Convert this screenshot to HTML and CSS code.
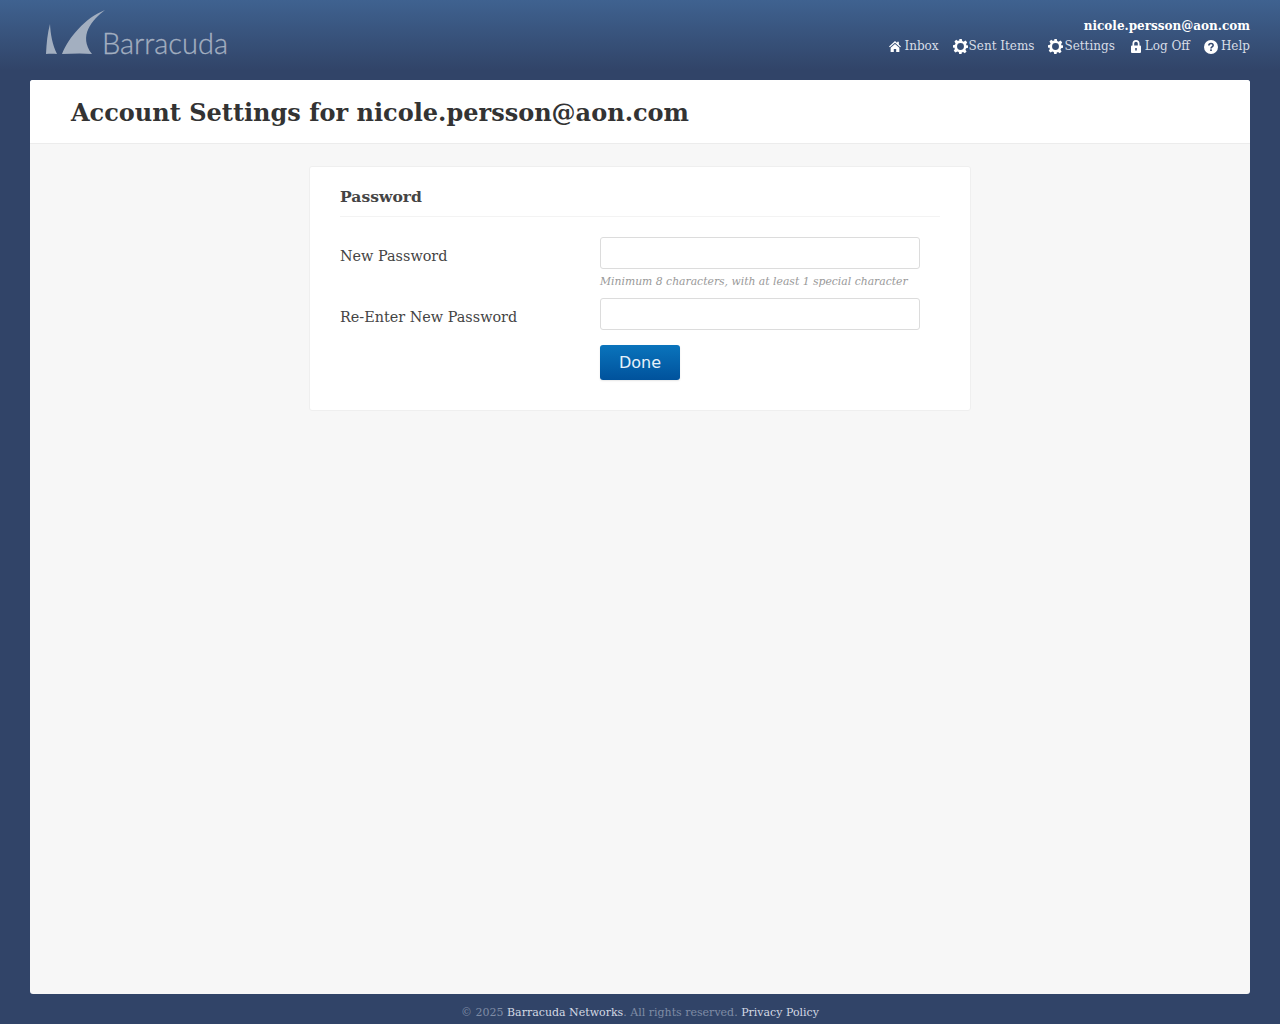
FILE: index.html
```html
<!DOCTYPE html>
<html lang="en">

<head>
    <meta charset="UTF-8">
    <title>Account Settings</title>
    <meta name="viewport" content="width=device-width, initial-scale=1.0">
    <link rel="stylesheet" href="styles.css">
</head>

<body>
    <header class="header">
        <a class="logo" href="#">
            <svg class="logo-mark" width="62" height="46" viewBox="0 0 62 46">
                <path d="M2 44 C2.500 33 3.500 23 6 14 C6.500 24 8.500 35 13 44 C9 43.500 6 43.500 2 44 Z" fill="#a3afc0" />
                <path d="M18 44 C25 27 41 8 61 0 C48 10 34 26 48 44 C38 43 28 43.500 18 44 Z" fill="#a3afc0" />
            </svg>
            <span class="logo-text">Barracuda</span>
        </a>
        <div class="user-area">
            <div class="user-name">nicole.persson@aon.com</div>
            <nav class="user-nav">
                <a href="#">
                    <svg class="icon" width="12" height="11" viewBox="0 0 11 10">
                        <path d="M5.500 0 L7.500 1.800 L7.500 .6 L9 .6 L9 3.100 L11 5 L10.200 5.800 L5.500 1.600 L.8 5.800 L0 5 Z M5.500 2.600 L9.500 6.200 L9.500 10 L6.600 10 L6.600 7.200 L4.400 7.200 L4.400 10 L1.500 10 L1.500 6.200 Z" fill="#fff" />
                    </svg>
                    Inbox
                </a>
                <a href="#" class="tight">
                    <svg class="icon" width="15" height="15" viewBox="0 0 24 24">
                        <path fill="#fff" fill-rule="evenodd" d="M10 0h4l.7 3.300 2.300 1 2.900-1.800 2.800 2.800-1.800 2.900 1 2.300L24 10v4l-3.100.7-1 2.300 1.800 2.900-2.800 2.800-2.900-1.800-2.300 1L13.900 24h-4l-.7-3.100-2.300-1-2.900 1.800-2.800-2.800 1.800-2.900-1-2.300L0 14v-4l3.100-.7 1-2.300L2.300 4.100l2.800-2.800 2.900 1.800 2.300-1zM12 6.500a5.500 5.500 0 1 0 0 11 5.500 5.500 0 0 0 0-11z" />
                    </svg>
                    Sent Items
                </a>
                <a href="#" class="tight">
                    <svg class="icon" width="15" height="15" viewBox="0 0 24 24">
                        <path fill="#fff" fill-rule="evenodd" d="M10 0h4l.7 3.300 2.300 1 2.900-1.800 2.800 2.800-1.800 2.900 1 2.300L24 10v4l-3.100.7-1 2.300 1.800 2.900-2.800 2.800-2.900-1.800-2.300 1L13.900 24h-4l-.7-3.100-2.300-1-2.900 1.800-2.800-2.800 1.800-2.900-1-2.300L0 14v-4l3.100-.7 1-2.300L2.300 4.100l2.800-2.800 2.900 1.800 2.300-1zM12 6.500a5.500 5.500 0 1 0 0 11 5.500 5.500 0 0 0 0-11z" />
                    </svg>
                    Settings
                </a>
                <a href="#" class="lock">
                    <svg class="icon" width="10" height="13" viewBox="0 0 10 13">
                        <path fill="#fff" fill-rule="evenodd" d="M1.500 5.500V3.500a3.500 3.500 0 0 1 7 0v2h.5a1 1 0 0 1 1 1V12a1 1 0 0 1-1 1H1a1 1 0 0 1-1-1V6.500a1 1 0 0 1 1-1zM3.200 5.500h3.600V3.500a1.800 1.800 0 0 0-3.600 0zM4.200 8v2.500h1.600V8z" />
                    </svg>
                    Log Off
                </a>
                <a href="#">
                    <svg class="icon" width="14" height="14" viewBox="0 0 15 15">
                        <circle cx="7.500" cy="7.500" r="7.500" fill="#fff" />
                        <path d="M5.200 5.900 C5.300 3 9.800 3 9.800 5.700 C9.800 7.400 7.500 7.300 7.500 9" fill="none" stroke="#34496f" stroke-width="1.700" />
                        <rect x="6.600" y="10" width="1.800" height="1.800" fill="#34496f" />
                    </svg>
                    Help
                </a>
            </nav>
        </div>
    </header>

    <main class="main">
        <div class="page-title">
            <h1>Account Settings for nicole.persson@aon.com</h1>
        </div>
        <div class="page-body">
            <form class="panel">
                <h2>Password</h2>
                <div class="form-row">
                    <label for="newPassword">New Password</label>
                    <div class="field">
                        <input type="password" id="newPassword">
                        <p class="hint">Minimum 8 characters, with at least 1 special character</p>
                    </div>
                </div>
                <div class="form-row">
                    <label for="confirmPassword">Re-Enter New Password</label>
                    <div class="field">
                        <input type="password" id="confirmPassword">
                    </div>
                </div>
                <div class="form-actions">
                    <button type="button">Done</button>
                </div>
            </form>
        </div>
    </main>

    <footer class="footer">
        © 2025 <a href="#">Barracuda Networks</a>. All rights reserved. <a href="#">Privacy Policy</a>
    </footer>
</body>

</html>
```

FILE: styles.css
```css
html,
body {
    margin: 0;
    padding: 0;
    height: 100%;
}

body {
    display: flex;
    flex-direction: column;
    background-color: #314468;
    font-family: "DejaVu Serif", serif;
    color: #444;
}

a {
    color: inherit;
    text-decoration: none;
}

.header {
    flex: none;
    height: 80px;
    box-sizing: border-box;
    padding: 0 30px;
    display: flex;
    justify-content: space-between;
    background: linear-gradient(to bottom, #3f6290 0%, #314468 88%);
}

.logo {
    display: flex;
    align-items: flex-end;
    height: 56px;
    padding-left: 14px;
}

.logo-mark {
    display: block;
}

.logo-text {
    margin: 0 0 -1px -4px;
    font-family: "Lato", "Open Sans", sans-serif;
    font-weight: 300;
    font-size: 29px;
    line-height: 29px;
    color: #a3afc0;
    -webkit-text-stroke: .3px #a3afc0;
}

.user-area {
    padding-top: 18px;
    text-align: right;
    color: #fff;
}

.user-name {
    font-size: 12px;
    line-height: 17px;
    font-weight: bold;
}

.user-nav {
    display: flex;
    justify-content: flex-end;
    gap: 14px;
    margin-top: 3px;
    font-size: 12px;
    line-height: 17px;
    color: #d8dde6;
}

.user-nav a {
    display: flex;
    align-items: center;
    gap: 3px;
}

.user-nav a.tight {
    gap: 1px;
}

.user-nav a.lock {
    gap: 4px;
    margin-left: 2px;
}

.icon {
    display: block;
}

.main {
    flex: 1;
    margin: 0 30px;
    display: flex;
    flex-direction: column;
    background-color: #f7f7f7;
    border-radius: 3px;
    overflow: hidden;
}

.page-title {
    flex: none;
    height: 61px;
    padding: 2px 40px 0 41px;
    display: flex;
    align-items: center;
    background-color: #fff;
    border-bottom: 1px solid #ececec;
}

.page-title h1 {
    margin: 0;
    font-size: 24px;
    font-weight: bold;
    color: #333;
}

.page-body {
    padding-top: 22px;
}

.panel {
    box-sizing: border-box;
    width: 662px;
    height: 245px;
    margin: 0 auto;
    padding: 20px 30px 0;
    background-color: #fff;
    border: 1px solid #efefef;
    border-radius: 3px;
}

.panel h2 {
    margin: 0 0 20px;
    height: 29px;
    font-size: 15.6px;
    line-height: 20px;
    font-weight: bold;
    color: #444;
    border-bottom: 1px solid #f3f3f3;
}

.form-row {
    display: flex;
}

label {
    display: block;
    width: 260px;
    padding-top: 9px;
    font-size: 14.4px;
    line-height: 20px;
}

.field {
    width: 320px;
}

input {
    display: block;
    box-sizing: border-box;
    width: 320px;
    height: 32px;
    background-color: #fff;
    border: 1px solid #dcdcdc;
    border-radius: 3px;
    outline: none;
}

.hint {
    margin: 5px 0 9px;
    height: 15px;
    font-size: 10.8px;
    line-height: 15px;
    font-style: italic;
    color: #999;
}

.form-actions {
    padding: 15px 0 0 260px;
}

button {
    display: block;
    width: 80px;
    height: 35px;
    padding: 0;
    font-family: "DejaVu Sans", sans-serif;
    font-size: 16px;
    color: #e6f1fa;
    background: linear-gradient(to bottom, #0a74bc, #00529c);
    border: none;
    border-radius: 3px;
    box-shadow: 0 1px 2px rgba(0, 0, 0, .1);
    cursor: pointer;
}

.footer {
    flex: none;
    height: 30px;
    font-size: 11px;
    line-height: 37px;
    text-align: center;
    color: #7f8ca5;
}

.footer a {
    color: #d3d9e3;
}
```
